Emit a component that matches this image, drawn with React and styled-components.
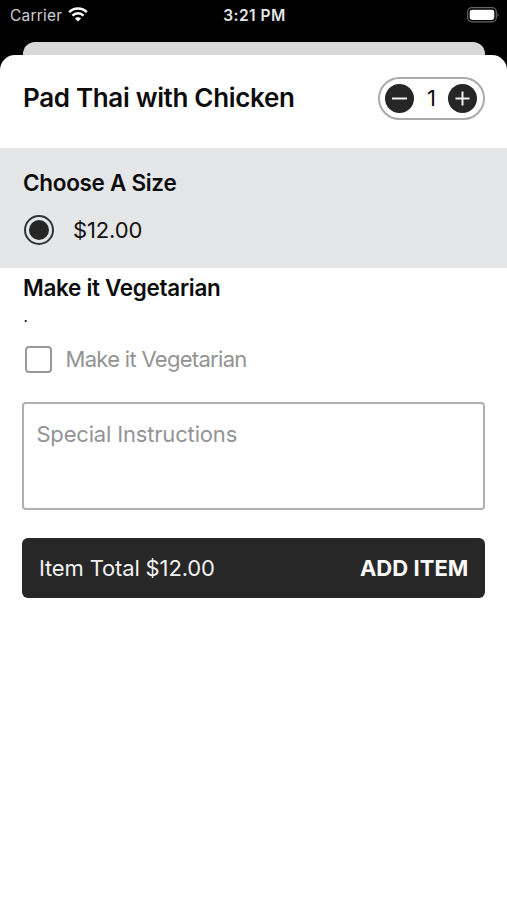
import React, { useState } from 'react';
import styled, { createGlobalStyle } from 'styled-components';

const GlobalStyle = createGlobalStyle`
  * {
    box-sizing: border-box;
  }
  body {
    margin: 0;
    background-color: #000;
    font-family: Inter, 'Liberation Sans', sans-serif;
    color: #0c0c0c;
  }
  button {
    font-family: inherit;
    cursor: pointer;
  }
`;

const Screen = styled.div`
  display: flex;
  flex-direction: column;
  height: 100vh;
  overflow: hidden;
  background-color: #000;
`;

const StatusBar = styled.header`
  display: grid;
  grid-template-columns: 1fr auto 1fr;
  align-items: center;
  height: 30px;
  flex-shrink: 0;
  padding: 0 8px 0 10px;
  color: #e4e4e4;
  font-size: 15.5px;
  line-height: 30px;
  .carrier {
    display: flex;
    align-items: center;
    gap: 6px;
    padding-top: 1px;
    color: #cfcfcf;
    letter-spacing: 0.2px;
    svg {
      margin-bottom: 3px;
    }
  }
  .time {
    padding-top: 1px;
    font-weight: 600;
    letter-spacing: 0.45px;
  }
  .battery {
    justify-self: end;
    margin-bottom: 1px;
  }
  svg {
    display: block;
  }
`;

const BackCard = styled.div`
  height: 13.5px;
  flex-shrink: 0;
  margin: 11.5px 22px 0 23px;
  border-radius: 12px 12px 0 0;
  background-color: #d8d8d8;
`;

const Sheet = styled.main`
  flex: 1;
  border-radius: 15px 15px 0 0;
  background-color: #fff;
`;

const ItemHeader = styled.div`
  display: flex;
  align-items: center;
  justify-content: space-between;
  height: 93px;
  padding: 0 22px 7px 23px;
`;

const Title = styled.h1`
  margin: 0;
  font-size: 26px;
  font-weight: 600;
  line-height: 32px;
  letter-spacing: -0.33px;
`;

const Stepper = styled.div`
  display: flex;
  align-items: center;
  justify-content: space-between;
  width: 107px;
  height: 43px;
  padding: 0 6px 0 5px;
  border: 2px solid #aaa;
  border-radius: 22px;
  .count {
    padding-left: 1px;
    font-size: 22px;
  }
`;

const RoundButton = styled.button`
  display: flex;
  align-items: center;
  justify-content: center;
  width: 29px;
  height: 29px;
  padding: 0;
  border: none;
  border-radius: 50%;
  background-color: #262626;
`;

const Section = styled.section`
  height: ${(props) => (props.$shaded ? '119.5px' : 'auto')};
  padding: ${(props) => (props.$shaded ? '21px 23px 0' : '6.5px 22px 0 23px')};
  background-color: ${(props) => (props.$shaded ? '#e4e6e7' : '#fff')};
`;

const Heading = styled.h2`
  margin: 0;
  font-size: 22.5px;
  font-weight: 600;
  line-height: 28px;
  letter-spacing: -0.3px;
`;

const Option = styled.label`
  display: flex;
  align-items: center;
  gap: ${(props) => props.$gap};
  margin-top: ${(props) => props.$top};
  padding-left: 1px;
  font-size: 22px;
  line-height: 30px;
  letter-spacing: ${(props) => (props.$muted ? '-0.7px' : '-0.15px')};
  color: ${(props) => (props.$muted ? '#939393' : '#111')};
`;

const Radio = styled.span`
  display: flex;
  align-items: center;
  justify-content: center;
  width: 30px;
  height: 30px;
  border: 2px solid #333;
  border-radius: 50%;
  &::after {
    content: '';
    width: 20px;
    height: 20px;
    border-radius: 50%;
    background-color: #262626;
  }
`;

const Checkbox = styled.span`
  width: 27px;
  height: 27px;
  margin-left: 0.5px;
  border: 2px solid #999;
  border-radius: 4px;
`;

const Note = styled.p`
  margin: 5px 0 0;
  padding-left: 0.5px;
  font-size: 15px;
  line-height: 20px;
`;

const Instructions = styled.textarea`
  display: block;
  width: 463px;
  height: 108px;
  margin: 28px 0 28px -0.6px;
  padding: 16px 12px;
  border: 2px solid #b0b0b0;
  border-radius: 4px;
  resize: none;
  outline: none;
  background-color: #fff;
  font-family: inherit;
  font-size: 22px;
  line-height: 28px;
  letter-spacing: -0.17px;
  &::placeholder {
    color: #939397;
    opacity: 1;
  }
`;

const AddBar = styled.button`
  display: flex;
  align-items: center;
  justify-content: space-between;
  width: 463px;
  height: 60px;
  margin-left: -0.6px;
  padding: 0 17px 0 16.5px;
  border: none;
  border-radius: 6px;
  background-color: #272727;
  color: #f2f2f2;
  font-size: 22px;
  .total {
    letter-spacing: -0.15px;
  }
  .action {
    color: #fafafa;
    font-weight: 700;
    letter-spacing: 0.05px;
  }
`;

const WifiIcon = () => (
  <svg width="20" height="15" viewBox="0 0 20 15" fill="none">
    <path d="M1.2 5.1a12.6 12.6 0 0 1 17.6 0" stroke="#fff" strokeWidth="2.7" />
    <path d="M4.5 8.6a7.9 7.9 0 0 1 11 0" stroke="#fff" strokeWidth="2.5" />
    <path d="M10 14.6 6.9 11.5a4.4 4.4 0 0 1 6.2 0z" fill="#fff" />
  </svg>
);

const BatteryIcon = () => (
  <svg width="32" height="16" viewBox="0 0 32 16" fill="none">
    <rect x="0.7" y="0.7" width="28.6" height="14.2" rx="4.2" stroke="#666" strokeWidth="1.2" />
    <rect x="2.7" y="2.7" width="24.6" height="10.2" rx="2.4" fill="#fff" />
    <path d="M30.6 5.8c1.2.5 1.2 3.7 0 4.2z" fill="#777" />
  </svg>
);

const SignIcon = ({ plus }) => (
  <svg width="17" height="17" viewBox="0 0 17 17" stroke="#f2f2f2" strokeWidth="2">
    <path d={plus ? 'M1.5 8.5h14M8.5 1.5v14' : 'M1 8.5h15'} />
  </svg>
);

export default function App() {
  const [count, setCount] = useState(1);
  const total = (12 * count).toFixed(2);

  return (
    <>
      <GlobalStyle />
      <Screen>
        <StatusBar>
          <div className="carrier">
            Carrier
            <WifiIcon />
          </div>
          <div className="time">3:21 PM</div>
          <div className="battery">
            <BatteryIcon />
          </div>
        </StatusBar>
        <BackCard />
        <Sheet>
          <ItemHeader>
            <Title>Pad Thai with Chicken</Title>
            <Stepper>
              <RoundButton
                aria-label="Remove one"
                onClick={() => setCount(Math.max(1, count - 1))}
              >
                <SignIcon />
              </RoundButton>
              <span className="count">{count}</span>
              <RoundButton aria-label="Add one" onClick={() => setCount(count + 1)}>
                <SignIcon plus />
              </RoundButton>
            </Stepper>
          </ItemHeader>
          <Section $shaded>
            <Heading>Choose A Size</Heading>
            <Option $gap="19px" $top="18px">
              <Radio />
              $12.00
            </Option>
          </Section>
          <Section>
            <Heading>Make it Vegetarian</Heading>
            <Note>.</Note>
            <Option $gap="14px" $top="17px" $muted>
              <Checkbox />
              Make it Vegetarian
            </Option>
            <Instructions placeholder="Special Instructions" />
            <AddBar>
              <span className="total">Item Total ${total}</span>
              <span className="action">ADD ITEM</span>
            </AddBar>
          </Section>
        </Sheet>
      </Screen>
    </>
  );
}
